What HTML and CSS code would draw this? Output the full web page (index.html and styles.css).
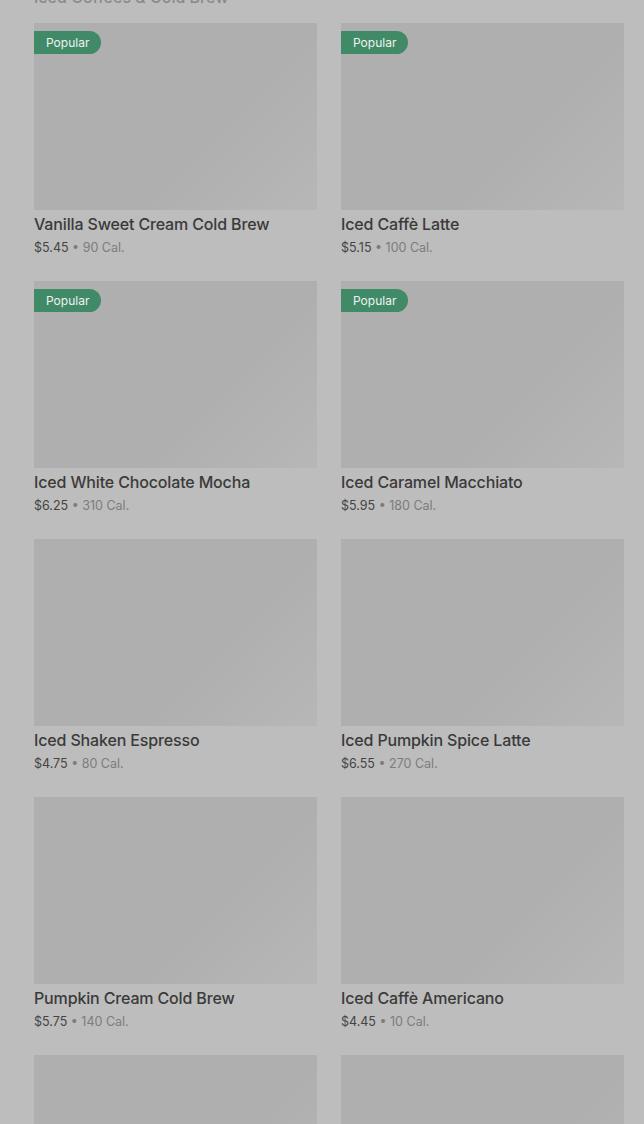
FILE: index.html
```html
<!DOCTYPE html>
<html lang="en">
<head>
<meta charset="utf-8">
<link rel="stylesheet" href="styles.css">
</head>
<body>
<main class="page">
  <h2 class="section-title">Iced Coffees &amp; Cold Brew</h2>
  <div class="grid">
    <article class="card">
      <div class="thumb"><span class="badge">Popular</span></div>
      <h3 class="name">Vanilla Sweet Cream Cold Brew</h3>
      <p class="meta"><span class="price">$5.45</span> • 90 Cal.</p>
    </article>
    <article class="card">
      <div class="thumb"><span class="badge">Popular</span></div>
      <h3 class="name">Iced Caffè Latte</h3>
      <p class="meta"><span class="price">$5.15</span> • 100 Cal.</p>
    </article>
    <article class="card">
      <div class="thumb"><span class="badge">Popular</span></div>
      <h3 class="name">Iced White Chocolate Mocha</h3>
      <p class="meta"><span class="price">$6.25</span> • 310 Cal.</p>
    </article>
    <article class="card">
      <div class="thumb"><span class="badge">Popular</span></div>
      <h3 class="name">Iced Caramel Macchiato</h3>
      <p class="meta"><span class="price">$5.95</span> • 180 Cal.</p>
    </article>
    <article class="card">
      <div class="thumb"></div>
      <h3 class="name">Iced Shaken Espresso</h3>
      <p class="meta"><span class="price">$4.75</span> • 80 Cal.</p>
    </article>
    <article class="card">
      <div class="thumb"></div>
      <h3 class="name">Iced Pumpkin Spice Latte</h3>
      <p class="meta"><span class="price">$6.55</span> • 270 Cal.</p>
    </article>
    <article class="card">
      <div class="thumb"></div>
      <h3 class="name">Pumpkin Cream Cold Brew</h3>
      <p class="meta"><span class="price">$5.75</span> • 140 Cal.</p>
    </article>
    <article class="card">
      <div class="thumb"></div>
      <h3 class="name">Iced Caffè Americano</h3>
      <p class="meta"><span class="price">$4.45</span> • 10 Cal.</p>
    </article>
    <article class="card">
      <div class="thumb"></div>
    </article>
    <article class="card">
      <div class="thumb"></div>
    </article>
  </div>
</main>
</body>
</html>
```

FILE: styles.css
```css
html, body {
  margin: 0;
  padding: 0;
  background: #bdbdbd;
  overflow: hidden;
}
body {
  font-family: Inter, "Liberation Sans", sans-serif;
  color: #3a3a3a;
}
.page {
  padding: 0 20px 0 34px;
}
.section-title {
  margin: -13px 0 0;
  height: 36px;
  font-size: 16px;
  line-height: 20px;
  font-weight: 500;
  color: #8a8a8a;
}
.grid {
  display: grid;
  grid-template-columns: 283px 283px;
  column-gap: 24px;
  row-gap: 0;
}
.card {
  height: 258px;
}
.thumb {
  position: relative;
  height: 187px;
  background: linear-gradient(135deg, #afafaf 0%, #afafaf 62%, #b7b7b7 100%);
}
.badge {
  position: absolute;
  left: 0;
  top: 8px;
  height: 23px;
  padding: 0 12px;
  border-radius: 0 12px 12px 0;
  background: #418a68;
  color: #eef3f0;
  font-size: 12px;
  line-height: 23px;
}
.name {
  margin: 3px 0 0;
  font-size: 16px;
  line-height: 22px;
  font-weight: 500;
  letter-spacing: -0.15px;
  color: #3a3a3a;
}
.meta {
  margin: 4px 0 0;
  font-size: 12.5px;
  line-height: 18px;
  color: #7c7c7c;
}
.price {
  color: #444;
}
```
